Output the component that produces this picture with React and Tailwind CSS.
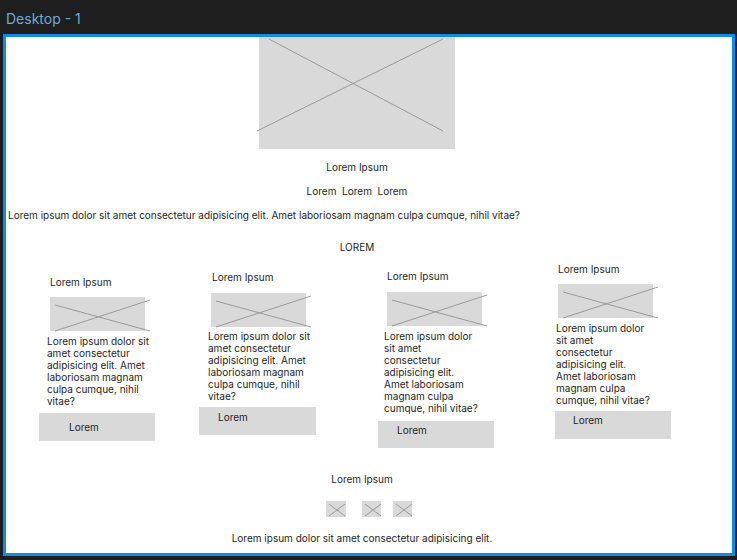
import React from 'react';

const font = { fontFamily: 'Inter, "Noto Sans", sans-serif' };

// grey placeholder with a cross drawn over it (lines run a bit past the right edge)
const Placeholder = ({ className, w, h, lines }) => (
  <div className={`relative bg-[#d9d9d9] shrink-0 ${className}`}>
    <svg className="absolute left-0 top-0 overflow-visible" width={w} height={h}>
      {lines.map((l, i) => (
        <line key={i} x1={l[0]} y1={l[1]} x2={l[2]} y2={l[3]} stroke="#9a9a9a" strokeWidth="1" />
      ))}
    </svg>
  </div>
);

const cardLines = [[5, 8, 100, 34], [5, 34, 100, 3]];

const cards = [
  {
    col: 'ml-[33px] mt-[13px] w-[116px]', titleMl: 'ml-[11px]', imgMt: 'mt-[9px]', imgMl: 'ml-[11px]',
    textMl: 'ml-[8px]', textMt: 'mt-[4px]', btnMt: 'mt-[6px]', btnPad: 'pl-[30px] pt-[8px]', btnH: 'h-[28px] w-[116px]',
    lines: ['Lorem ipsum dolor sit', 'amet consectetur', 'adipisicing elit. Amet', 'laboriosam magnam', 'culpa cumque, nihil', 'vitae?'],
  },
  {
    col: 'ml-[44px] mt-[8px] w-[117px]', titleMl: 'ml-[13px]', imgMt: 'mt-[10px]', imgMl: 'ml-[12px]',
    textMl: 'ml-[9px]', textMt: 'mt-[3px]', btnMt: 'mt-[5px]', btnPad: 'pl-[19px] pt-[4px]', btnH: 'h-[28px] w-[117px]',
    lines: ['Lorem ipsum dolor sit', 'amet consectetur', 'adipisicing elit. Amet', 'laboriosam magnam', 'culpa cumque, nihil', 'vitae?'],
  },
  {
    col: 'ml-[62px] mt-[7px] w-[116px]', titleMl: 'ml-[9px]', imgMt: 'mt-[10px]', imgMl: 'ml-[9px]',
    textMl: 'ml-[6px]', textMt: 'mt-[4px]', btnMt: 'mt-[7px]', btnPad: 'pl-[19px] pt-[3px]', btnH: 'h-[27px] w-[116px]',
    lines: ['Lorem ipsum dolor', 'sit amet', 'consectetur', 'adipisicing elit.', 'Amet laboriosam', 'magnam culpa', 'cumque, nihil vitae?'],
  },
  {
    col: 'ml-[61px] mt-0 w-[116px]', titleMl: 'ml-[3px]', imgMt: 'mt-[9px]', imgMl: 'ml-[3px]',
    textMl: 'ml-[1px]', textMt: 'mt-[4px]', btnMt: 'mt-[5px]', btnPad: 'pl-[18px] pt-[3px]', btnH: 'h-[28px] w-[116px]',
    lines: ['Lorem ipsum dolor', 'sit amet', 'consectetur', 'adipisicing elit.', 'Amet laboriosam', 'magnam culpa', 'cumque, nihil vitae?'],
  },
];

const Card = ({ c }) => (
  <div className={`flex flex-col items-start shrink-0 ${c.col}`}>
    <div className={`text-[10px] leading-[12px] whitespace-nowrap ${c.titleMl}`}>Lorem Ipsum</div>
    <Placeholder className={`w-[95px] h-[34px] ${c.imgMt} ${c.imgMl}`} w={95} h={34} lines={cardLines} />
    <div className={`text-[10px] leading-[12px] whitespace-nowrap ${c.textMl} ${c.textMt}`}>
      {c.lines.map((l, i) => (
        <div key={i}>{l}</div>
      ))}
    </div>
    <div className={`bg-[#d9d9d9] text-[10px] leading-[12px] ${c.btnH} ${c.btnMt} ${c.btnPad}`}>Lorem</div>
  </div>
);

const smallX = [[3, 3, 19, 15], [3, 15, 19, 3]];

export default function App() {
  return (
    <div className="w-[737px] h-[560px] bg-[#1e1e1e] overflow-hidden" style={font}>
      {/* canvas frame label */}
      <div className="h-[34px] pl-[6px] pt-[10px] text-[14px] leading-[18px] text-[#6fa9dc]">Desktop - 1</div>

      {/* frame */}
      <div className="ml-[3px] w-[732px] h-[522px] border-[3px] border-[#0d8ce9] bg-white text-[#1e1e1e] overflow-hidden">
        <Placeholder
          className="ml-[253px] w-[196px] h-[112px]"
          w={196}
          h={112}
          lines={[[10, 2, 184, 94], [-2, 94, 184, 2]]}
        />
        <div className="w-[702px] text-center text-[10px] leading-[12px] mt-[12px]">Lorem Ipsum</div>
        <div className="w-[702px] text-center text-[10px] leading-[12px] mt-[12px] whitespace-pre">Lorem  Lorem  Lorem</div>
        <div className="ml-[2px] text-[10px] leading-[12px] mt-[12px] whitespace-nowrap">
          Lorem ipsum dolor sit amet consectetur adipisicing elit. Amet laboriosam magnam culpa cumque, nihil vitae?
        </div>
        <div className="w-[702px] text-center text-[10px] leading-[12px] mt-[20px]">LOREM</div>

        <div className="flex items-start mt-[10px] h-[186px]">
          {cards.map((c, i) => (
            <Card key={i} c={c} />
          ))}
        </div>

        <div className="w-[712px] text-center text-[10px] leading-[12px] mt-[24px]">Lorem Ipsum</div>
        <div className="flex ml-[320px] mt-[16px]">
          <Placeholder className="w-[20px] h-[16px]" w={20} h={16} lines={smallX} />
          <Placeholder className="w-[19px] h-[16px] ml-[16px]" w={19} h={16} lines={smallX} />
          <Placeholder className="w-[19px] h-[16px] ml-[12px]" w={19} h={16} lines={smallX} />
        </div>
        <div className="w-[712px] text-center text-[10px] leading-[12px] mt-[15px]">
          Lorem ipsum dolor sit amet consectetur adipisicing elit.
        </div>
      </div>
    </div>
  );
}
